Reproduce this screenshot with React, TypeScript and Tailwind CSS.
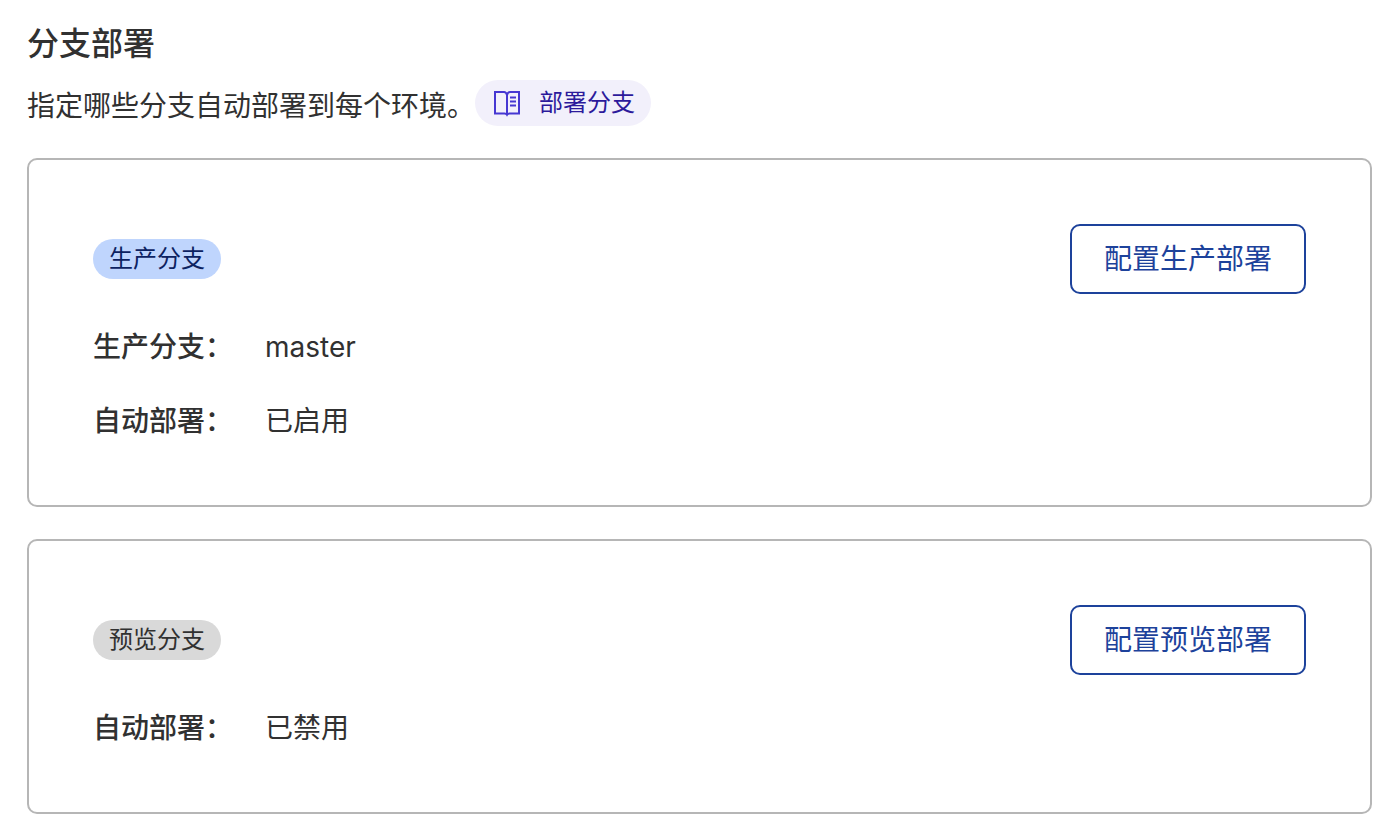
import type { ReactNode } from "react";

type Row = { label: string; value: string };

function BookIcon() {
  return (
    <svg className="h-7 w-7 shrink-0 text-[#4637d2]" viewBox="0 0 28 28" fill="none" stroke="currentColor" strokeWidth="2" aria-hidden="true">
      <path d="M14 6C13.500 4.200 12.500 3 11 3H2V24.500h9.500c1.200 0 2 .4 2.500 1.300.5-.9 1.300-1.300 2.500-1.300H26V3h-9C15.500 3 14.500 4.200 14 6V26" />
      <path d="M17 8.500h6M17 12.500h6M17 16.500h6" />
    </svg>
  );
}

function DeployCard({ badge, action, rows }: { badge: ReactNode; action: string; rows: Row[] }) {
  return (
    <section className="rounded-[10px] border-2 border-[#b6b6b6] px-16 pt-16 pb-[63px]">
      <div className="flex items-center justify-between">
        {badge}
        <button type="button" className="rounded-[10px] border-2 border-[#1d429b] px-8 py-3 text-[28px] leading-[42px] text-[#1d429b]">
          {action}
        </button>
      </div>
      <dl className="mt-8 flex flex-col gap-8">
        {rows.map((row) => (
          <div key={row.label} className="flex text-[28px] leading-[42px]">
            <dt className="w-[172px] font-medium">{row.label}</dt>
            <dd>{row.value}</dd>
          </div>
        ))}
      </dl>
    </section>
  );
}

export default function App() {
  return (
    <main className="min-h-screen bg-white pt-5 pr-7 pl-[27px] font-['Inter','Noto_Sans_CJK_SC',sans-serif] text-[#313131]">
      <h1 className="text-[32px] leading-[48px] font-medium">分支部署</h1>
      <div className="mt-3 flex items-start">
        <p className="text-[28px] leading-[52px]">指定哪些分支自动部署到每个环境。</p>
        <a href="#branches" className="flex h-[46px] items-center gap-[18px] rounded-full bg-[#f2f0fb] pr-4 pl-[18px] text-2xl text-[#2c1a9b]">
          <BookIcon />
          部署分支
        </a>
      </div>
      <div className="mt-[26px] flex flex-col gap-8">
        <DeployCard
          badge={<span className="rounded-full bg-[#bfd5fd] px-4 text-2xl leading-10 text-[#0c2261]">生产分支</span>}
          action="配置生产部署"
          rows={[
            { label: "生产分支：", value: "master" },
            { label: "自动部署：", value: "已启用" },
          ]}
        />
        <DeployCard
          badge={<span className="rounded-full bg-[#d9d9d9] px-4 text-2xl leading-10">预览分支</span>}
          action="配置预览部署"
          rows={[{ label: "自动部署：", value: "已禁用" }]}
        />
      </div>
    </main>
  );
}
